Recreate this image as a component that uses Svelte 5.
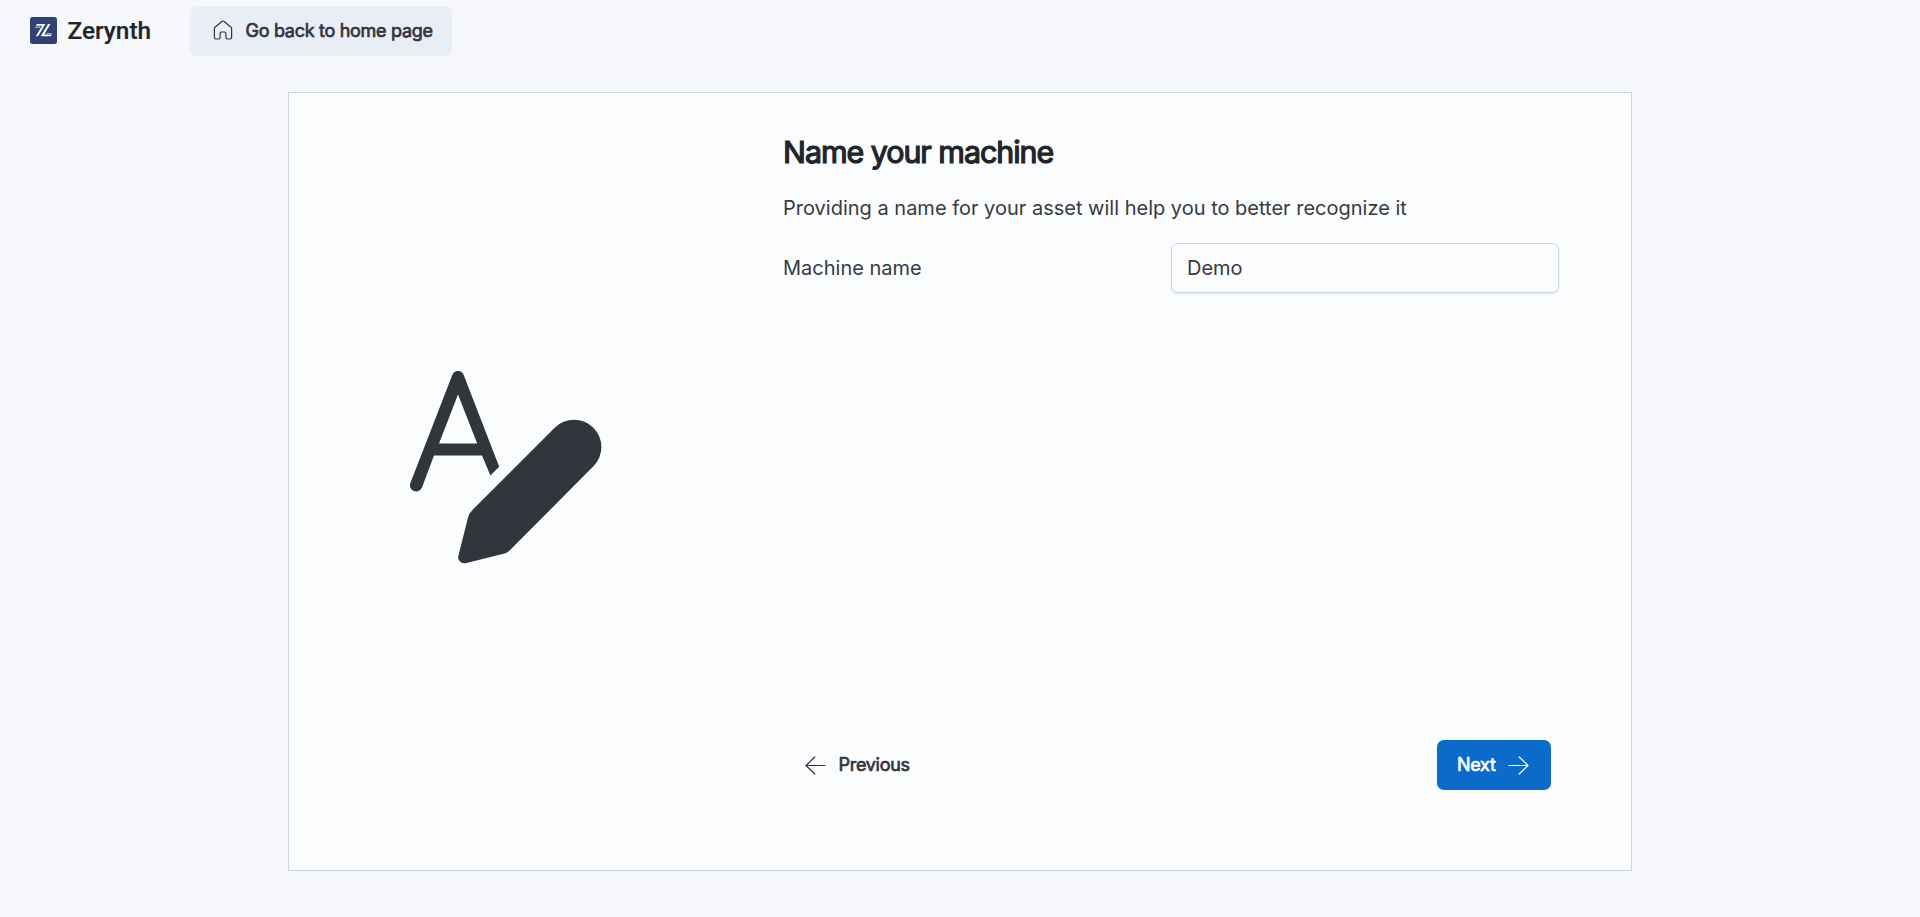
<script>
  let name = $state('Demo');
</script>

<header>
  <div class="brand">
    <svg width="27" height="27" viewBox="0 0 27 27">
      <rect width="27" height="27" rx="2.5" fill="#2f4273" />
      <path fill="#fff" d="M6.8 7H15.4L8 19.2H5.8L12.2 8.7H6ZM5.2 9.7H10.6L10.2 10.4H4.8ZM18 7H20.4L14.2 17.5H21.8L20.8 19.2H10.7ZM16.6 15.9H22.2L21.8 16.6H16.2Z" />
    </svg>
    <span>Zerynth</span>
  </div>
  <button class="home">
    <svg width="20" height="21" viewBox="0 0 20 21" fill="none" stroke="#31363d" stroke-width="1.2">
      <path d="M1.4 8.6Q1.4 7.8 2 7.2L9.2 1.3Q10 .7 10.8 1.3L18 7.2Q18.6 7.8 18.6 8.6V17.6Q18.6 19 17.2 19H14.3Q12.9 19 12.9 17.6V13.4Q12.9 12 11.5 12H8.5Q7.1 12 7.1 13.4V17.6Q7.1 19 5.7 19H2.8Q1.4 19 1.4 17.6Z" />
    </svg>
    <span>Go back to home page</span>
  </button>
</header>

<main>
  <div class="picture">
    <svg width="192" height="193" viewBox="0 0 192 193" fill="#31363d">
      <path fill-rule="evenodd" d="M42.4 3.8C44.5-1.3 51.5-1.3 53.6 3.8L89.2 95.8L80.4 104.6L72 84.5H24L12 116.5C8.2 124.2-2.4 119.5.4 112ZM48 23.4L29 72.5H67.2Z" />
      <path d="M144.7 56.7A27.3 27.3 0 0 1 183.4 95.3L100.6 178.6Q97.5 181.8 93.5 182.8L55.5 192.2C51.4 193 47.5 189.5 48.3 185.2L58 146.4Q59 142.4 62 139.4Z" />
    </svg>
  </div>
  <section>
    <h1>Name your machine</h1>
    <p>Providing a name for your asset will help you to better recognize it</p>
    <div class="field">
      <label for="machine">Machine name</label>
      <input id="machine" bind:value={name} />
    </div>
    <footer>
      <button class="prev">
        <svg width="21" height="19" viewBox="0 0 21 19" fill="none" stroke="currentColor" stroke-width="1.2" stroke-linecap="round" stroke-linejoin="round">
          <path d="M20 9.5H1M9.8 1L1 9.5L9.8 18" />
        </svg>
        <span>Previous</span>
      </button>
      <button class="next">
        <span>Next</span>
        <svg width="21" height="19" viewBox="0 0 21 19" fill="none" stroke="currentColor" stroke-width="1.2" stroke-linecap="round" stroke-linejoin="round">
          <path d="M1 9.5H20M11.2 1L20 9.5L11.2 18" />
        </svg>
      </button>
    </footer>
  </section>
</main>

<style>
  :global(body) {
    background: #f6f7fb;
    font-family: Inter, sans-serif;
    color: #363b42;
  }
  :global(*) { box-sizing: border-box; }
  header {
    display: flex;
    align-items: center;
    height: 62px;
    padding-left: 30px;
  }
  svg { display: block; flex: none; }
  .brand {
    display: flex;
    align-items: center;
    gap: 10.5px;
    width: 160px;
    padding-bottom: 1px;
    font: 500 24.4px/30px Roboto, sans-serif;
    color: #212529;
    -webkit-text-stroke: 0.2px currentColor;
  }
  button {
    display: flex;
    align-items: center;
    height: 50px;
    border: 0;
    border-radius: 7px;
    background: none;
    font: 400 18px/28px Inter, sans-serif;
    letter-spacing: -0.29px;
    color: #31363d;
    -webkit-text-stroke: 0.7px currentColor;
    white-space: nowrap;
  }
  .home {
    width: 262px;
    padding: 0 0 0 22.5px;
    gap: 13px;
    background: #e9edf6;
  }
  .home svg { margin-bottom: 1px; }
  main {
    display: grid;
    grid-template-columns: 432px 776px;
    column-gap: 62px;
    width: 1344px;
    height: 779px;
    margin: 30px auto 0;
    border: 1px solid #ced5e2;
    background: #fbfcfe;
  }
  .picture {
    display: flex;
    justify-content: center;
    padding: 278px 0 0 2px;
  }
  section {
    display: flex;
    flex-direction: column;
    padding: 39px 0 80px;
  }
  h1 {
    margin: 0;
    font-size: 30.4px;
    line-height: 40px;
    font-weight: 400;
    letter-spacing: -1.02px;
    color: #212529;
    -webkit-text-stroke: 1.2px currentColor;
  }
  p {
    margin: 21px 0 20px;
    font-size: 20px;
    line-height: 30px;
  }
  .field {
    display: grid;
    grid-template-columns: 1fr 1fr;
    align-items: center;
    font-size: 20px;
  }
  input {
    width: 388px;
    height: 50px;
    padding: 0 15px;
    border: 1px solid #ccd5e2;
    border-radius: 7px;
    background: #fbfcfe;
    box-shadow: 0 1px 2px rgba(40, 60, 90, 0.12);
    font: 400 20px/30px Inter, sans-serif;
    color: #363b42;
  }
  footer {
    display: flex;
    justify-content: space-between;
    margin-top: auto;
    padding-right: 8px;
  }
  .prev { padding: 0 0 0 22px; gap: 12.5px; }
  .next {
    width: 114px;
    padding: 0 0 0 20px;
    gap: 12.5px;
    background: #0b6bcb;
    color: #fbfcfe;
  }
</style>
